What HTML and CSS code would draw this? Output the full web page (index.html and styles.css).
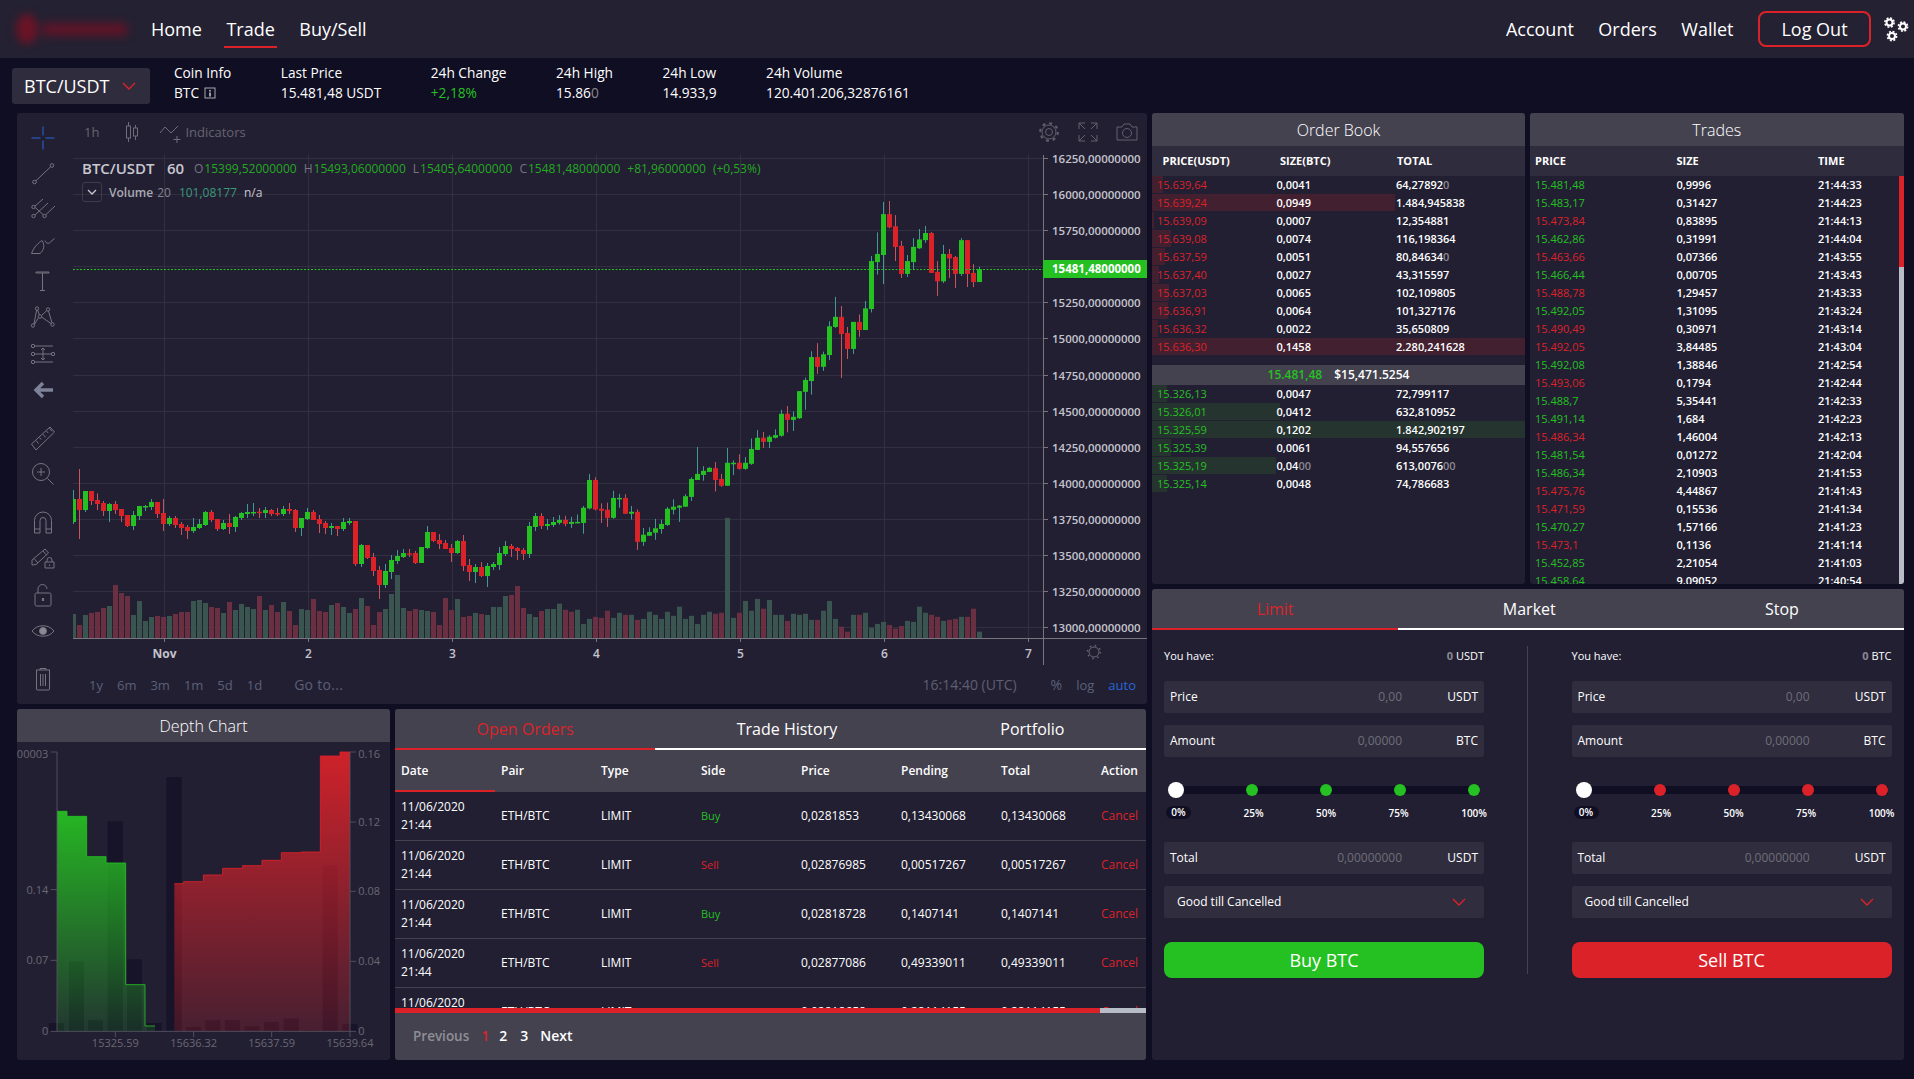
FILE: index.html
```html
<!DOCTYPE html>
<html lang="en">
<head>
<meta charset="utf-8">
<title>BTC/USDT Trade</title>
<link rel="stylesheet" href="styles.css">
</head>
<body>
<header class="topbar">
  <div class="logo" aria-hidden="true"><span class="logo-mark"></span><span class="logo-word"></span></div>
  <nav class="nav">
    <a class="nav-link">Home</a>
    <a class="nav-link is-active">Trade</a>
    <a class="nav-link">Buy/Sell</a>
  </nav>
  <nav class="nav nav-right">
    <a class="nav-link">Account</a>
    <a class="nav-link">Orders</a>
    <a class="nav-link">Wallet</a>
    <a class="logout">Log Out</a>
    <svg class="gears" viewBox="0 0 25 25" width="25" height="25">
      <g fill="none" stroke="#fff">
        <g><circle cx="5.5" cy="5.5" r="3" stroke-width="2"/><circle cx="5.5" cy="5.5" r="4.6" stroke-width="1.6" stroke-dasharray="2 1.61"/></g>
        <g><circle cx="19" cy="9.5" r="3" stroke-width="2"/><circle cx="19" cy="9.5" r="4.6" stroke-width="1.6" stroke-dasharray="2 1.61"/></g>
        <g><circle cx="8" cy="19" r="3" stroke-width="2"/><circle cx="8" cy="19" r="4.6" stroke-width="1.6" stroke-dasharray="2 1.61"/></g>
      </g>
    </svg>
  </nav>
</header>

<section class="ticker">
  <button class="pair-btn">BTC/USDT
    <svg class="chev" viewBox="0 0 14 8" width="14" height="8"><path d="M1 1l6 6 6-6" fill="none" stroke="#dc2229" stroke-width="1.4"/></svg>
  </button>
  <div class="stats">
    <div class="stat"><span>Coin Info</span><span class="with-icon">BTC
      <svg viewBox="0 0 12 12" width="12" height="12"><rect x="1" y="1" width="10" height="10" fill="none" stroke="#a9a8b0"/><path d="M6 3v1.4M6 5.4V9.4" stroke="#d8d8dc" stroke-width="1.4"/></svg></span></div>
    <div class="stat"><span>Last Price</span><span>15.481,48 USDT</span></div>
    <div class="stat"><span>24h Change</span><span class="green">+2,18%</span></div>
    <div class="stat"><span>24h High</span><span>15.86<span class="dim">0</span></span></div>
    <div class="stat"><span>24h Low</span><span>14.933,9</span></div>
    <div class="stat"><span>24h Volume</span><span>120.401.206,32876161</span></div>
  </div>
</section>

<main class="workspace">
  <div class="col-left">
    <section class="panel chart-panel">
      <aside class="tools">
        <svg class="tool" viewBox="0 0 24 24"><path stroke="#2766d8" d="M12 .5v9M12 14.500v9M.5 12h9M14.500 12h9"/></svg>
        <svg class="tool" viewBox="0 0 24 24"><circle cx="3.500" cy="20" r="1.800"/><circle cx="21" cy="3.500" r="1.800"/><path d="M5 18.700L19.600 4.800"/></svg>
        <svg class="tool" viewBox="0 2 24 24"><circle cx="2.500" cy="11" r="1.700"/><circle cx="2.500" cy="20" r="1.700"/><circle cx="13.500" cy="20" r="1.700"/><path d="M4 10l8-7M4.200 11.500l7.800 7M4 19L17 7M15 18.500L24 10"/></svg>
        <svg class="tool" viewBox="0 2.500 24 24"><path d="M.5 22C3 15 8 11 11 9c3 4 2 10-2 13zM14 9c1 4 5 3 6 1l3.500-3"/></svg>
        <svg class="tool" viewBox="0 1 24 24"><path d="M5 3h13v1H5zM11.500 4v17M9 21.500h5"/></svg>
        <svg class="tool" viewBox="0 1.500 24 24"><circle cx="2" cy="21" r="1.700"/><circle cx="6" cy="4" r="1.700"/><circle cx="9" cy="12" r="1.700"/><circle cx="17" cy="5" r="1.700"/><circle cx="21.500" cy="20" r="1.700"/><path d="M3 19.500L5.600 5.700M3.300 20L7.700 13M6.700 5.500l1.700 5M10.500 11l5.300-5M10.500 12.500l9.800 6.700M17.500 6.600l3.500 11.700"/></svg>
        <svg class="tool" viewBox="0 0 24 24"><circle cx="2" cy="4" r="1.700"/><circle cx="2" cy="12" r="1.700"/><circle cx="2" cy="20" r="1.700"/><circle cx="22" cy="12" r="1.700"/><path d="M3.700 4H22M3.700 12h16.600M3.700 20H22M12 6v12M10 8l2-2 2 2M10 16l2 2 2-2"/></svg>
        <svg class="tool tool-arrow" viewBox="0 0 24 24"><path d="M22 12H6M12 5l-7 7 7 7"/></svg>
        <svg class="tool" viewBox="0 0 24 24"><path d="M.5 18L19 1l4.500 5L5 24zM5 14.500l2.500 3M8.500 11.500l1.700 2M12 8.300l2.500 3M15.500 5l1.700 2M18.500 2.300l2.500 3"/></svg>
        <svg class="tool" viewBox="0 0 24 24"><circle cx="10" cy="10" r="8.500"/><path d="M6 10h8M10 6v8M16.500 16.500l6 6"/></svg>
        <svg class="tool" viewBox="0 1 24 24"><path d="M3.500 23V10.500a8.500 8.500 0 0 1 17 0V23h-5.500V10.500a3 3 0 0 0-6 0V23zM3.500 19h5.500M15 19h5.500"/></svg>
        <svg class="tool" viewBox="0 2 24 24"><path d="M1 15L14 4l3.500 4L5 19.500l-4 .5zM3 13.500l4 4.500M12 6l3.500 4"/><path d="M14 17h9v6h-9zM16 17v-2a2.500 2.500 0 0 1 5 0v2M18.500 19.500v1.500"/></svg>
        <svg class="tool" viewBox="0 0 24 24"><rect x="4" y="10" width="16" height="13" rx="1.500"/><path d="M7 10V6a4.500 4.500 0 0 1 9 0"/><path stroke-width="2.200" d="M12 15v3"/></svg>
        <svg class="tool" viewBox="0 0 24 24"><path d="M1 12c5-7 17-7 22 0-5 7-17 7-22 0z"/><circle cx="12" cy="12" r="3.500" fill="#8b8a95"/></svg>
        <svg class="tool" viewBox="0 2 24 24"><path d="M5 3h14M9 3V1.500h6V3M5.500 3v19a1 1 0 0 0 1 1h11a1 1 0 0 0 1-1V3M9.500 7v12M12 7v12M14.500 7v12"/></svg>
      </aside>
      <div class="chart-main">
        <div class="chart-toolbar">
          <span class="interval">1h</span>
          <svg class="tb-candle" viewBox="0 0 14 20" width="14" height="20"><path d="M3.500 0v20M10.500 3v15" stroke="#6f6d7a" fill="none"/><rect x="1.500" y="4" width="4" height="12" fill="#221f33" stroke="#6f6d7a"/><rect x="8.500" y="6" width="4" height="8" fill="#221f33" stroke="#6f6d7a"/></svg>
          <svg class="tb-ind" viewBox="0 0 24 18" width="24" height="18"><path d="M0 8l5-6 6 6 7-7M17 11v7M13.500 14.500h7" fill="none" stroke="#6f6d7a"/></svg>
          <span class="indicators">Indicators</span>
          <span class="tb-spacer"></span>
          <svg class="tb-icon" viewBox="0 0 22 22" width="22" height="22"><circle cx="11" cy="11" r="3.500"/><circle cx="11" cy="11" r="7"/><circle cx="11" cy="11" r="8.800" stroke-width="2" stroke-dasharray="3 3.900"/></svg>
          <svg class="tb-icon" viewBox="0 0 22 22" width="22" height="22"><path d="M2 8V2h6M14 2h6v6M20 14v6h-6M8 20H2v-6M2 2l6 6M20 2l-6 6M20 20l-6-6M2 20l6-6"/></svg>
          <svg class="tb-icon" viewBox="0 0 22 22" width="22" height="22"><path d="M1 6h5l2-3h6l2 3h5v13H1z"/><circle cx="11" cy="12" r="4.500"/></svg>
        </div>
        <div class="chart-stage">
          <svg id="chart" class="chart-svg" viewBox="73 155 1074 518" width="1074" height="518"></svg>
          <div class="legend">
            <div class="legend-row"><span class="leg-pair">BTC/USDT</span><span class="leg-int">60</span>
              <span class="leg-ohlc"><i>O</i>15399,52000000</span><span class="leg-ohlc"><i>H</i>15493,06000000</span><span class="leg-ohlc"><i>L</i>15405,64000000</span><span class="leg-ohlc"><i>C</i>15481,48000000</span><span class="leg-ohlc">+81,96000000</span><span class="leg-ohlc">(+0,53%)</span></div>
            <div class="legend-row legend-vol"><span class="leg-btn"><svg viewBox="0 0 10 6" width="10" height="6"><path d="M1 1l4 4 4-4" fill="none" stroke="#c8c8d0" stroke-width="1.300"/></svg></span><span class="vol-name">Volume</span><span class="vol-len">20</span><span class="vol-val">101,08177</span><span class="vol-na">n/a</span></div>
          </div>
        </div>
        <div class="chart-footer">
          <span>1y</span><span>6m</span><span>3m</span><span>1m</span><span>5d</span><span>1d</span>
          <span class="goto">Go to...</span>
          <span class="tb-spacer"></span>
          <span class="clock">16:14:40 (UTC)</span><span class="pct">%</span><span>log</span><span class="auto">auto</span>
        </div>
      </div>
    </section>

    <div class="lower">
      <section class="panel depth">
        <h2 class="panel-title">Depth Chart</h2>
        <svg class="depth-svg" viewBox="51 125 1119 957" width="373" height="319">
          <defs>
            <linearGradient id="gGreen" x1="0" y1="0" x2="0" y2="1"><stop offset="0" stop-color="#26bb22" stop-opacity=".97"/><stop offset="1" stop-color="#25c022" stop-opacity=".15"/></linearGradient>
            <linearGradient id="gRed" x1="0" y1="0" x2="0" y2="1"><stop offset="0" stop-color="#dc2229" stop-opacity=".93"/><stop offset="1" stop-color="#dc2229" stop-opacity=".2"/></linearGradient>
          </defs>
          <g fill="#171429">
            <rect x="147" y="968" width="45" height="25"/><rect x="207" y="783" width="45" height="210"/><rect x="264" y="960" width="45" height="33"/><rect x="323" y="363" width="46" height="630"/><rect x="381" y="777" width="45" height="216"/><rect x="440" y="968" width="45" height="25"/><rect x="499" y="230" width="46" height="763"/><rect x="558" y="980" width="45" height="13"/><rect x="616" y="960" width="45" height="33"/><rect x="675" y="959" width="45" height="34"/><rect x="734" y="978" width="45" height="15"/><rect x="792" y="965" width="45" height="28"/><rect x="851" y="954" width="45" height="39"/><rect x="910" y="990" width="45" height="3"/><rect x="968" y="495" width="45" height="498"/><rect x="1027" y="971" width="45" height="22"/>
          </g>
          <path d="M171 993V333h30v15h59v121h58v19h59v365h58v124h30v16z" fill="url(#gGreen)"/>
          <path d="M171 333h30v15h59v121h58v19h59v365h58v124h30" fill="none" stroke="#25c022" stroke-width="2.500"/>
          <path d="M523 993V550h28v-6h59v-20h58v-20h59v-8h59v-16h58v-23h59v-2h58V167h59v-12h30v838z" fill="url(#gRed)"/>
          <path d="M523 550h28v-6h59v-20h58v-20h59v-8h59v-16h58v-23h59v-2h58V167h59v-12h30" fill="none" stroke="#dc2229" stroke-width="2.500"/>
          <path d="M171 155v838M152 155h19M152 568h19M152 780h19M152 993h916M1050 155v838M1050 155h18M1050 365h18M1050 573h18M1050 783h18M346 993v17M581 993v17M815 993v17M1050 993v17" fill="none" stroke="#5a5864" stroke-width="2.500"/>
          <g class="depth-labels">
            <text x="145" y="173" text-anchor="end">0.00003</text><text x="145" y="581" text-anchor="end">0.14</text><text x="145" y="791" text-anchor="end">0.07</text><text x="145" y="1004" text-anchor="end">0</text>
            <text x="1075" y="173">0.16</text><text x="1075" y="377">0.12</text><text x="1075" y="584">0.08</text><text x="1075" y="794">0.04</text><text x="1075" y="1004">0</text>
            <text x="346" y="1041" text-anchor="middle">15325.59</text><text x="581" y="1041" text-anchor="middle">15636.32</text><text x="815" y="1041" text-anchor="middle">15637.59</text><text x="1050" y="1041" text-anchor="middle">15639.64</text>
          </g>
        </svg>
      </section>

      <section class="panel orders">
        <div class="tabs tabs-orders">
          <a class="tab is-active">Open Orders</a><a class="tab">Trade History</a><a class="tab">Portfolio</a>
        </div>
        <div class="orders-scroll">
          <table class="orders-table">
            <thead><tr><th class="sorted">Date</th><th>Pair</th><th>Type</th><th>Side</th><th>Price</th><th>Pending</th><th>Total</th><th>Action</th></tr></thead>
            <tbody>
              <tr><td>11/06/2020<br>21:44</td><td>ETH/BTC</td><td>LIMIT</td><td class="side green">Buy</td><td>0,0281853</td><td>0,13430068</td><td>0,13430068</td><td class="cancel">Cancel</td></tr>
              <tr><td>11/06/2020<br>21:44</td><td>ETH/BTC</td><td>LIMIT</td><td class="side red">Sell</td><td>0,02876985</td><td>0,00517267</td><td>0,00517267</td><td class="cancel">Cancel</td></tr>
              <tr><td>11/06/2020<br>21:44</td><td>ETH/BTC</td><td>LIMIT</td><td class="side green">Buy</td><td>0,02818728</td><td>0,1407141</td><td>0,1407141</td><td class="cancel">Cancel</td></tr>
              <tr><td>11/06/2020<br>21:44</td><td>ETH/BTC</td><td>LIMIT</td><td class="side red">Sell</td><td>0,02877086</td><td>0,49339011</td><td>0,49339011</td><td class="cancel">Cancel</td></tr>
              <tr><td>11/06/2020<br>21:44</td><td>ETH/BTC</td><td>LIMIT</td><td class="side green">Buy</td><td>0,02818658</td><td>0,28114155</td><td>0,28114155</td><td class="cancel">Cancel</td></tr>
            </tbody>
          </table>
        </div>
        <div class="hscroll"><span class="hscroll-thumb"></span></div>
        <div class="pager"><span class="pg-off">Previous</span><span class="pg-on">1</span><span>2</span><span class="pg-three">3</span><span>Next</span></div>
      </section>
    </div>
  </div>

  <div class="col-right">
    <div class="books">
      <section class="panel book">
        <h2 class="panel-title">Order Book</h2>
        <div class="book-head ob-cols"><span>PRICE(USDT)</span><span>SIZE(BTC)</span><span>TOTAL</span></div>
        <div class="ob-row ob-cols"><i class="bar bar-red" style="width:11px"></i><span class="red">15.639,64</span><span>0,0041</span><span>64,27892<span class="dim">0</span></span></div>
        <div class="ob-row ob-cols"><i class="bar bar-red" style="width:243px"></i><span class="red">15.639,24</span><span>0,0949</span><span>1.484,945838</span></div>
        <div class="ob-row ob-cols"><i class="bar bar-red" style="width:2px"></i><span class="red">15.639,09</span><span>0,0007</span><span>12,354881</span></div>
        <div class="ob-row ob-cols"><i class="bar bar-red" style="width:19px"></i><span class="red">15.639,08</span><span>0,0074</span><span>116,198364</span></div>
        <div class="ob-row ob-cols"><i class="bar bar-red" style="width:13px"></i><span class="red">15.637,59</span><span>0,0051</span><span>80,84634<span class="dim">0</span></span></div>
        <div class="ob-row ob-cols"><i class="bar bar-red" style="width:7px"></i><span class="red">15.637,40</span><span>0,0027</span><span>43,315597</span></div>
        <div class="ob-row ob-cols"><i class="bar bar-red" style="width:17px"></i><span class="red">15.637,03</span><span>0,0065</span><span>102,109805</span></div>
        <div class="ob-row ob-cols"><i class="bar bar-red" style="width:16px"></i><span class="red">15.636,91</span><span>0,0064</span><span>101,327176</span></div>
        <div class="ob-row ob-cols"><i class="bar bar-red" style="width:6px"></i><span class="red">15.636,32</span><span>0,0022</span><span>35,650809</span></div>
        <div class="ob-row ob-cols"><i class="bar bar-red" style="width:373px"></i><span class="red">15.636,30</span><span>0,1458</span><span>2.280,241628</span></div>
        <div class="ob-mid"><span class="green">15.481,48</span><span>$15,471.5254</span></div>
        <div class="ob-row ob-cols"><i class="bar bar-green" style="width:15px"></i><span class="green">15.326,13</span><span>0,0047</span><span>72,799117</span></div>
        <div class="ob-row ob-cols"><i class="bar bar-green" style="width:128px"></i><span class="green">15.326,01</span><span>0,0412</span><span>632,810952</span></div>
        <div class="ob-row ob-cols"><i class="bar bar-green" style="width:373px"></i><span class="green">15.325,59</span><span>0,1202</span><span>1.842,902197</span></div>
        <div class="ob-row ob-cols"><i class="bar bar-green" style="width:19px"></i><span class="green">15.325,39</span><span>0,0061</span><span>94,557656</span></div>
        <div class="ob-row ob-cols"><i class="bar bar-green" style="width:124px"></i><span class="green">15.325,19</span><span>0,04<span class="dim">00</span></span><span>613,0076<span class="dim">00</span></span></div>
        <div class="ob-row ob-cols"><i class="bar bar-green" style="width:15px"></i><span class="green">15.325,14</span><span>0,0048</span><span>74,786683</span></div>
      </section>

      <section class="panel book trades">
        <h2 class="panel-title">Trades</h2>
        <div class="book-head tr-cols"><span>PRICE</span><span>SIZE</span><span>TIME</span></div>
        <div class="trades-wrap">
          <div class="trades-list">
            <div class="ob-row tr-cols"><span class="green">15.481,48</span><span>0,9996</span><span>21:44:33</span></div>
            <div class="ob-row tr-cols"><span class="green">15.483,17</span><span>0,31427</span><span>21:44:23</span></div>
            <div class="ob-row tr-cols"><span class="red">15.473,84</span><span>0,83895</span><span>21:44:13</span></div>
            <div class="ob-row tr-cols"><span class="green">15.462,86</span><span>0,31991</span><span>21:44:04</span></div>
            <div class="ob-row tr-cols"><span class="red">15.463,66</span><span>0,07366</span><span>21:43:55</span></div>
            <div class="ob-row tr-cols"><span class="green">15.466,44</span><span>0,00705</span><span>21:43:43</span></div>
            <div class="ob-row tr-cols"><span class="red">15.488,78</span><span>1,29457</span><span>21:43:33</span></div>
            <div class="ob-row tr-cols"><span class="green">15.492,05</span><span>1,31095</span><span>21:43:24</span></div>
            <div class="ob-row tr-cols"><span class="red">15.490,49</span><span>0,30971</span><span>21:43:14</span></div>
            <div class="ob-row tr-cols"><span class="red">15.492,05</span><span>3,84485</span><span>21:43:04</span></div>
            <div class="ob-row tr-cols"><span class="green">15.492,08</span><span>1,38846</span><span>21:42:54</span></div>
            <div class="ob-row tr-cols"><span class="red">15.493,06</span><span>0,1794</span><span>21:42:44</span></div>
            <div class="ob-row tr-cols"><span class="green">15.488,7</span><span>5,35441</span><span>21:42:33</span></div>
            <div class="ob-row tr-cols"><span class="green">15.491,14</span><span>1,684</span><span>21:42:23</span></div>
            <div class="ob-row tr-cols"><span class="red">15.486,34</span><span>1,46004</span><span>21:42:13</span></div>
            <div class="ob-row tr-cols"><span class="green">15.481,54</span><span>0,01272</span><span>21:42:04</span></div>
            <div class="ob-row tr-cols"><span class="green">15.486,34</span><span>2,10903</span><span>21:41:53</span></div>
            <div class="ob-row tr-cols"><span class="red">15.475,76</span><span>4,44867</span><span>21:41:43</span></div>
            <div class="ob-row tr-cols"><span class="red">15.471,59</span><span>0,15536</span><span>21:41:34</span></div>
            <div class="ob-row tr-cols"><span class="green">15.470,27</span><span>1,57166</span><span>21:41:23</span></div>
            <div class="ob-row tr-cols"><span class="red">15.473,1</span><span>0,1136</span><span>21:41:14</span></div>
            <div class="ob-row tr-cols"><span class="green">15.452,85</span><span>2,21054</span><span>21:41:03</span></div>
            <div class="ob-row tr-cols"><span class="green">15.458,64</span><span>9,09052</span><span>21:40:54</span></div>
          </div>
          <div class="vscroll"><span class="vscroll-thumb"></span></div>
        </div>
      </section>
    </div>

    <section class="panel order-form">
      <div class="tabs tabs-form">
        <a class="tab is-active">Limit</a><a class="tab">Market</a><a class="tab">Stop</a>
      </div>
      <div class="form-body">
        <div class="order-col">
          <div class="have"><span>You have:</span><span><b class="dim">0</b> USDT</span></div>
          <div class="field"><span class="f-label">Price</span><span class="f-val">0,00</span><span class="f-unit">USDT</span></div>
          <div class="field"><span class="f-label">Amount</span><span class="f-val">0,00000</span><span class="f-unit">BTC</span></div>
          <div class="slider slider-buy"><span class="knob"></span><span class="dot"></span><span class="dot"></span><span class="dot"></span><span class="dot"></span></div>
          <div class="slider-labels"><span class="first">0%</span><span>25%</span><span>50%</span><span>75%</span><span>100%</span></div>
          <div class="field field-total"><span class="f-label">Total</span><span class="f-val">0,00000000</span><span class="f-unit">USDT</span></div>
          <div class="select">Good till Cancelled<svg viewBox="0 0 14 8" width="14" height="8"><path d="M1 1l6 6 6-6" fill="none" stroke="#dc2229" stroke-width="1.400"/></svg></div>
          <button class="action action-buy">Buy BTC</button>
        </div>
        <div class="form-divider"></div>
        <div class="order-col">
          <div class="have"><span>You have:</span><span><b class="dim">0</b> BTC</span></div>
          <div class="field"><span class="f-label">Price</span><span class="f-val">0,00</span><span class="f-unit">USDT</span></div>
          <div class="field"><span class="f-label">Amount</span><span class="f-val">0,00000</span><span class="f-unit">BTC</span></div>
          <div class="slider slider-sell"><span class="knob"></span><span class="dot"></span><span class="dot"></span><span class="dot"></span><span class="dot"></span></div>
          <div class="slider-labels"><span class="first">0%</span><span>25%</span><span>50%</span><span>75%</span><span>100%</span></div>
          <div class="field field-total"><span class="f-label">Total</span><span class="f-val">0,00000000</span><span class="f-unit">USDT</span></div>
          <div class="select">Good till Cancelled<svg viewBox="0 0 14 8" width="14" height="8"><path d="M1 1l6 6 6-6" fill="none" stroke="#dc2229" stroke-width="1.400"/></svg></div>
          <button class="action action-sell">Sell BTC</button>
        </div>
      </div>
    </section>
  </div>
</main>
<script src="chart.js"></script>
</body>
</html>
```

FILE: styles.css
```css
* { box-sizing: border-box; }
html, body { margin: 0; padding: 0; }
body {
  width: 1914px;
  height: 1079px;
  overflow: hidden;
  background: #100e22;
  color: #fff;
  font-family: "Open Sans", "Liberation Sans", sans-serif;
}
.green { color: #25c022; }
.red { color: #dc2229; }
.dim { color: #8a8992; }

/* top bar */
.topbar {
  height: 58px;
  display: flex;
  align-items: center;
  background: #242132;
  position: relative;
}
.logo {
  width: 138px;
  height: 58px;
  display: flex;
  align-items: center;
  gap: 5px;
  padding-left: 16px;
  filter: blur(4px);
}
.logo-mark { width: 22px; height: 30px; border-radius: 50%; background: #6a1426; }
.logo-word { width: 84px; height: 13px; background: #5e1428; }
.nav { display: flex; align-items: center; gap: 24.500px; margin-left: 13px; height: 58px; }
.nav-right { margin-left: auto; padding-right: 5px; }
.nav-link {
  font-size: 18px;
  line-height: 24px;
  color: #fff;
  position: relative;
}
.nav-link.is-active::after {
  content: "";
  position: absolute;
  left: -2px;
  right: -2px;
  top: 29px;
  height: 2px;
  background: #dc2229;
}
.logout {
  width: 113px;
  height: 36px;
  border: 2px solid #dc2229;
  border-radius: 8px;
  font-size: 18px;
  display: flex;
  align-items: center;
  justify-content: center;
}
.gears { margin-left: -11.500px; }

/* ticker */
.ticker {
  height: 55px;
  display: flex;
  align-items: center;
  padding-left: 12px;
}
.pair-btn {
  width: 138px;
  height: 36px;
  background: #2f2c3d;
  border: 0;
  border-radius: 3px;
  color: #fff;
  font: 400 18px "Open Sans", sans-serif;
  display: flex;
  align-items: center;
  justify-content: space-between;
  padding: 0 14px 0 12px;
}
.stats { display: flex; gap: 49.500px; margin-left: 24px; padding-bottom: 5px; }
.stat { display: flex; flex-direction: column; font-size: 13.700px; line-height: 20.500px; }
.with-icon { display: flex; align-items: center; gap: 5px; }

/* workspace */
.workspace {
  display: flex;
  gap: 5px;
  padding-left: 17px;
}
.col-left { width: 1130px; display: flex; flex-direction: column; gap: 5px; }
.col-right { width: 751.500px; display: flex; flex-direction: column; gap: 5px; }
.panel { background: #221f33; border-radius: 3px; overflow: hidden; }
.panel-title {
  margin: 0;
  height: 33px;
  background: #44424f;
  font-size: 16px;
  font-weight: 300;
  line-height: 34px;
  text-align: center;
}

/* chart */
.chart-panel { height: 591px; display: flex; }
.tools { width: 56px; display: flex; flex-direction: column; align-items: center; padding-top: 12.500px; padding-right: 4px; }
.tool {
  width: 24px;
  height: 24px;
  margin-bottom: 12px;
  fill: none;
  stroke: #757480;
  stroke-width: 1;
  flex: none;
  overflow: visible;
}
.tool-arrow { stroke: #7d8298; stroke-width: 3.400; margin-bottom: 24px; }
.tool:nth-child(10) { margin-bottom: 25px; }
.tool:nth-child(14) { margin-bottom: 26px; }
.chart-main { width: 1074px; display: flex; flex-direction: column; }
.chart-toolbar {
  height: 42px;
  display: flex;
  align-items: center;
  padding: 0 0 4px 11px;
  font-size: 13px;
  color: #66646f;
}
.tb-candle { margin-left: 26px; }
.tb-ind { margin-left: 21px; margin-top: 4px; }
.indicators { margin-left: 1px; }
.tb-spacer { flex: 1; }
.tb-icon {
  fill: none;
  stroke: #62606c;
  stroke-width: 1;
  margin-right: 17px;
}
.tb-icon:last-child { margin-right: 9px; }
.chart-stage { position: relative; height: 518px; }
.chart-svg { display: block; }
.chart-svg text { font-family: "Open Sans", sans-serif; }
.axis-y { font-size: 11.500px; font-weight: 600; fill: #c4c4cc; }
.axis-tag { font-size: 11.500px; font-weight: 700; fill: #fff; }
.axis-x { font-size: 12px; font-weight: 600; fill: #c4c4cc; text-anchor: middle; }
.axis-x-strong { font-weight: 700; }
.legend {
  position: absolute;
  left: 9px;
  top: 2px;
}
.legend-row { display: flex; align-items: center; height: 22px; white-space: nowrap; }
.leg-pair { font-size: 15px; color: #c8c8d0; font-weight: 600; width: 73px; white-space: nowrap; }
.leg-int { font-size: 15px; color: #c8c8d0; font-weight: 600; margin-left: 12px; width: 27px; }
.leg-ohlc { font-size: 12px; color: #25a822; margin-right: 7px; }
.leg-ohlc i { font-style: normal; color: #77757f; margin-right: 1px; }
.legend-vol { margin-top: 2px; }
.leg-btn { width: 20px; height: 20px; border: 1px solid #3d3b4b; border-radius: 3px; display: flex; align-items: center; justify-content: center; margin-right: 7px; }
.vol-name { font-size: 12px; font-weight: 600; color: #aaa9b3; }
.vol-len { font-size: 12px; color: #85848f; margin-left: 4px; }
.vol-val { font-size: 12px; color: #3a9a7a; margin-left: 8px; }
.vol-na { font-size: 12px; color: #c8c8d0; margin-left: 7px; }
.chart-footer {
  height: 31px;
  display: flex;
  align-items: center;
  padding: 0 0 8px 16px;
  font-size: 13px;
  color: #5a6078;
  gap: 14px;
}
.goto { margin-left: 18px; font-size: 14px; letter-spacing: .3px; }
.clock { color: #5f5f70; margin-right: 20px; font-size: 14px; }
.pct { font-size: 14px; }
.auto { color: #2766d8; margin-right: 11px; }

/* lower */
.lower { display: flex; gap: 5px; height: 351px; }
.depth { width: 373px; }
.depth-svg { display: block; }
.depth-labels text { font-family: "Open Sans", sans-serif; font-size: 33px; fill: #6a6874; }
.orders { width: 751px; display: flex; flex-direction: column; }
.tabs { display: flex; background: #44424f; height: 41px; }
.tab {
  flex: 1 1 auto;
  text-align: center;
  font-size: 16px;
  line-height: 38px;
  padding-top: 1px;
  border-bottom: 2px solid #fff;
  color: #fff;
}
.tab.is-active { color: #dc2229; border-bottom-color: #dc2229; }
.orders-scroll { height: 258px; overflow: hidden; }
.orders-table { width: 751px; table-layout: fixed; border-collapse: separate; border-spacing: 0; font-size: 12px; }
.orders-table th {
  height: 42px;
  background: #44424f;
  font-weight: 600;
  text-align: left;
  padding: 0 0 2px 6px;
  width: 100px;
}
.orders-table th:last-child { width: 51px; }
.orders-table th.sorted { box-shadow: inset 0 -2px 0 #dc2229; }
.orders-table td {
  height: 49px;
  padding: 0 0 0 6px;
  line-height: 18px;
  border-bottom: 1px solid #44424f;
  white-space: nowrap;
}
.orders-table .side { font-size: 11px; }
.orders-table .cancel { color: #dc2229; }
.hscroll { height: 5px; background: #b8bcc6; display: flex; flex: none; }
.hscroll-thumb { width: 705px; background: #dc2229; }
.pager {
  flex: 1;
  background: #44424f;
  display: flex;
  align-items: center;
  padding: 0 0 2px 18px;
  gap: 12px;
  font-size: 14px;
  font-weight: 600;
}
.pg-off { color: #8f8e96; font-size: 13.500px; }
.pg-on { color: #dc2229; margin-right: -2px; }
.pg-three { margin-left: 1px; }

/* books */
.books { display: flex; gap: 5px; height: 471px; }
.book { width: 373px; }
.trades { width: 373.500px; }
.book-head {
  height: 30px;
  background: #2f2c3d;
  font-size: 11px;
  font-weight: 700;
  align-items: center;
  padding-bottom: 2px;
}
.ob-cols { display: grid; grid-template-columns: 119.500px 119.500px 1fr; }
.book-head.ob-cols { padding-left: 10.500px; grid-template-columns: 117.500px 117px 1fr; }
.ob-row {
  position: relative;
  height: 18px;
  font-size: 11px;
  line-height: 18px;
  font-weight: 600;
  padding-left: 5px;
  white-space: nowrap;
}
.ob-row span { position: relative; }
.ob-row > span:first-of-type { font-weight: 400; }
.bar { position: absolute; left: 0; top: 0; height: 17px; }
.bar-red { background: #432030; }
.bar-green { background: #25342f; }
.ob-mid {
  margin-top: 9px;
  height: 20px;
  background: #44424f;
  display: flex;
  justify-content: center;
  align-items: center;
  gap: 12px;
  font-size: 12px;
  font-weight: 600;
  padding-bottom: 2px;
}
.tr-cols { display: grid; grid-template-columns: 141.500px 141.500px 1fr; padding-left: 5px; }
.trades-wrap { position: relative; height: 408px; overflow: hidden; }
.trades-list { padding-right: 5px; }
.vscroll {
  position: absolute;
  right: 0;
  top: 0;
  width: 5px;
  height: 100%;
  background: #b8bcc6;
}
.vscroll-thumb { display: block; height: 91px; background: #dc2229; }

/* order form */
.order-form { height: 471px; }
.form-body { display: flex; justify-content: space-between; padding: 0 12px 0 12px; }
.order-col { width: 320px; padding-top: 18px; }
.form-divider { width: 1px; height: 328px; margin-top: 16px; background: #44424f; }
.have { display: flex; justify-content: space-between; height: 16px; font-size: 11px; line-height: 16px; }
.have b { font-weight: 700; }
.field, .select {
  height: 32px;
  margin-top: 12px;
  background: #302d3e;
  border-radius: 2px;
  display: flex;
  align-items: center;
  font-size: 12px;
  padding: 0 6px 1px;
}
.have + .field { margin-top: 17px; }
.field { position: relative; }
.f-label { flex: 1; }
.f-val { color: #6f6d79; margin-right: 76px; }
.f-unit { position: absolute; right: 6px; }
.slider {
  margin-top: 25px;
  height: 16px;
  display: flex;
  align-items: center;
  justify-content: space-between;
  padding: 0 4px;
  background: linear-gradient(#100e22, #100e22) 12px 4px / 304px 8px no-repeat;
}
.knob { width: 16px; height: 16px; border-radius: 50%; background: #fff; }
.dot { width: 12px; height: 12px; border-radius: 50%; }
.slider-buy .dot { background: #25c022; }
.slider-sell .dot { background: #dc2229; }
.slider-labels {
  margin: 8px -3px 0 2px;
  height: 13px;
  display: flex;
  justify-content: space-between;
  align-items: center;
  font-size: 10px;
  font-weight: 600;
}
.slider-labels .first { width: 25px; height: 13px; line-height: 13px; text-align: center; background: #100e22; border-radius: 7px; }
.field-total { margin-top: 23px; }
.select { padding: 0 18px 1px 13px; justify-content: space-between; font-size: 12px; }
.action {
  width: 100%;
  height: 36px;
  margin-top: 24px;
  border: 0;
  border-radius: 8px;
  color: #fff;
  font: 400 18px "Open Sans", sans-serif;
}
.action-buy { background: #25c022; }
.action-sell { background: #dc2229; }
```

FILE: chart.js
```js
(function () {
  var NS = 'http://www.w3.org/2000/svg';
  var svg = document.getElementById('chart');
  function el(name, attrs, text, parent) {
    var n = document.createElementNS(NS, name);
    for (var k in attrs) n.setAttribute(k, attrs[k]);
    if (text !== undefined && text !== null) n.textContent = text;
    (parent || svg).appendChild(n);
    return n;
  }
  // colour flag, wick top, body top, body bottom, wick bottom (first series: 3x crop units from y=440)
  var A = [
    ['g',150,177,246,252],['r',87,177,210,297],['g',153,153,210,216],['r',153,153,183,195],['r',160,180,192,210],
    ['r',183,189,213,228],['g',189,192,213,246],['r',183,192,210,222],['r',207,207,228,246],['r',225,225,258,261],
    ['g',213,225,258,270],['g',198,198,228,240],['g',195,198,201,213],['g',177,186,201,210],['r',186,186,222,234],
    ['r',177,219,252,273],['g',228,234,252,258],['r',228,234,255,264],['r',246,252,264,285],['r',255,261,273,297],
    ['g',234,261,273,279],['g',237,252,264,267],['g',213,216,255,258],['r',210,216,240,246],['r',237,237,267,273],
    ['g',240,249,267,270],['r',222,249,261,282],['g',228,231,261,276],['g',216,219,234,240],['g',192,216,222,234],
    ['g',189,216,220,228],['r',204,215,219,234],['g',201,210,219,234],['r',207,210,222,228],['r',204,219,221,228],
    ['g',198,207,222,228],['r',189,207,213,222],['r',207,210,264,276],['g',234,234,264,288],['g',204,216,237,240],
    ['r',210,216,240,240],['r',225,237,252,279],['r',243,249,264,282],['g',249,258,264,285],['r',258,258,267,288],
    ['g',234,246,267,273],['g',234,243,249,255],['r',243,243,372,378],['g',312,315,372,381],['r',315,315,354,357],
    ['r',339,351,393,408],['r',378,390,435,477],['g',372,393,435,444],['g',345,360,396,417],['g',330,348,363,372],
    ['g',327,339,351,354],['r',327,340,343,351],['r',333,339,369,372],['g',321,321,369,369],['g',258,276,324,327],
    ['r',276,276,303,306],['r',282,300,312,327],['r',300,309,327,327],['r',312,324,339,366],['g',300,303,339,342],
    ['r',285,303,378,393],['r',357,375,396,423],['g',372,381,396,429],['r',366,381,408,411],['g',369,378,408,441],
    ['g',366,372,381,390],['g',321,339,375,390],['g',303,318,342,348],['r',312,318,327,351],['r',321,324,333,360],
    ['r',324,330,342,360],['g',246,258,342,354],['g',219,228,261,273],['r',219,228,258,267],['g',237,252,258,270],
    ['g',231,246,255,261]
  ];
  // second series: crop units, y = 180 + v / 2.96
  var B = [
    ['g',992,1006,1015,1020],['r',994,1006,1018,1025],['g',997,1012,1018,1030],['g',990,1012,1015,1015],['g',965,970,1015,1047],
    ['g',870,888,972,975],['r',880,888,975,978],['r',957,973,979,1015],['r',955,976,1000,1027],['g',920,941,1000,1003],
    ['g',929,941,944,970],['r',930,941,988,988],['g',965,982,988,1005],['r',975,982,1071,1095],['g',1030,1050,1071,1083],
    ['g',1028,1042,1053,1053],['g',1003,1031,1044,1065],['g',1005,1018,1033,1047],['g',968,973,1021,1024],['g',945,967,976,990],
    ['g',962,964,970,1012],['g',930,936,967,967],['g',880,885,938,950],['g',790,870,888,888],['g',847,861,873,890],
    ['g',850,852,864,864],['r',835,853,888,922],['r',870,885,905,908],['g',793,837,905,905],['g',830,837,840,873],
    ['r',812,837,855,857],['g',820,837,855,858],['g',765,796,840,843],['g',740,763,799,799],['r',746,763,775,793],
    ['g',755,760,775,793],['g',738,755,763,765],['g',680,692,757,760],['r',669,692,710,747],['g',685,701,710,743],
    ['g',625,625,705,707],['g',585,592,627,680],['g',507,524,595,635],['r',483,524,553,574],['g',508,516,553,565],
    ['g',418,433,518,533],['g',346,405,435,438],['r',373,405,456,586],['r',435,453,500,530],['g',420,420,500,515],
    ['r',398,420,444,464],['g',358,380,444,444],['g',225,240,382,392],['g',155,219,243,280],['g',65,101,222,308],
    ['r',62,101,140,143],['r',104,137,198,240],['r',180,195,278,290],['g',222,240,278,287],['g',172,198,243,265],
    ['g',145,176,202,204],['g',136,157,178,186],['r',154,157,275,275],['r',240,272,300,343],['g',192,219,300,305],
    ['r',204,219,232,290],['r',225,228,278,320],['g',172,178,278,284],['r',178,178,278,317],['r',249,275,302,317],
    ['g',257,264,302,302]
  ];
  // volume tops and colours
  var VA = ('522g 555r 525g 519r 516r 504r 498g 435r 459r 468r 525g 483g 543g 531g 528r 531r 528g 522r 516r 516r ' +
    '483g 480g 489g 501r 504r 519g 486r 510g 492g 501g 507g 468r 510g 495r 516r 486g 513r 555r 507g 510g ' +
    '477r 513r 516r 495g 489r 501g 519g 507r 474g 498r 555r 516r 507g 462g 405g 504g 513r 507r 510g 513g ' +
    '516r 555r 474r 510r 477g 531r 528r 519g 522r 525g 501g 501g 468g 465r 438r 504r 522g 531g 513r 507g 507g').split(' ');
  var VB = ('1254g 1272r 1278r 1272g 1314g 1299g 1293r 1296r 1275r 1296g 1281g 1287r 1287g 1302r 1299g 1278g 1287g 1299g 1278g 1290g ' +
    '1263g 1299g 1290g 1314g 1287g 1278g 1284r 1281r 1000g 1296g 1281r 1246g 1275g 1240g 1269r 1243g 1287g 1287g 1305r 1284g ' +
    '1287g 1284g 1302g 1302r 1275g 1246g 1299g 1322r 1337r 1287g 1287r 1281g 1325g 1314g 1308g 1317r 1328r 1320r 1305g 1308g ' +
    '1263g 1281g 1287r 1293r 1305g 1302r 1299r 1293g 1293r 1269r 1337g').split(' ');

  function ya(v) { return 440 + v / 3; }
  function yb(v) { return 180 + v / 2.96; }
  function rectX(i) { return 71 + 6 * i; }

  var GRID = '#322f41', AXIS = '#77757f';
  var LEFT = 73, RIGHT = 1147, AX = 1043, BASE = 638;

  // grid
  var prices = [16250,16000,15750,15500,15250,15000,14750,14500,14250,14000,13750,13500,13250,13000];
  prices.forEach(function (p) {
    var y = Math.round(194.2 + (16000 - p) * 0.14427) + 0.5;
    el('path', { d: 'M' + LEFT + ' ' + y + 'H' + AX, stroke: GRID, fill: 'none' });
    if (p !== 15500) el('text', { x: 1052, y: y + 4, 'class': 'axis-y' }, p + ',00000000');
    el('path', { d: 'M' + AX + ' ' + y + 'h5', stroke: AXIS, fill: 'none' });
  });
  var days = [[164,'Nov'],[308,'2'],[452,'3'],[596,'4'],[740,'5'],[884,'6'],[1028,'7']];
  days.forEach(function (d) {
    var x = d[0] + 0.5;
    el('path', { d: 'M' + x + ' 155V' + BASE, stroke: GRID, fill: 'none' });
    el('path', { d: 'M' + x + ' ' + BASE + 'v4', stroke: AXIS, fill: 'none' });
    el('text', { x: x, y: 658, 'class': d[1] === 'Nov' ? 'axis-x axis-x-strong' : 'axis-x' }, d[1]);
  });

  var defs = el('defs', {});
  var clip = el('clipPath', { id: 'pane' }, null, defs);
  el('rect', { x: LEFT, y: 155, width: AX - LEFT, height: BASE - 155 }, null, clip);
  var pane = el('g', { 'clip-path': 'url(#pane)' });

  // volume
  function vol(list, conv) {
    return list.map(function (s) {
      return { top: conv(parseFloat(s)), c: s.charAt(s.length - 1) };
    });
  }
  vol(VA, ya).concat(vol(VB, yb)).forEach(function (v, i) {
    el('rect', { x: rectX(i), y: v.top, width: 5, height: BASE - v.top, fill: v.c === 'g' ? '#3a5450' : '#6a2f40' }, null, pane);
  });

  // candles
  function series(list, conv) {
    return list.map(function (c) { return [c[0], conv(c[1]), conv(c[2]), conv(c[3]), conv(c[4])]; });
  }
  series(A, ya).concat(series(B, yb)).forEach(function (c, i) {
    var x = rectX(i), g = c[0] === 'g';
    el('rect', { x: x + 2, y: c[1], width: 1, height: c[4] - c[1], fill: g ? '#3f9b94' : '#c65560' }, null, pane);
    el('rect', { x: x, y: c[2], width: 5, height: Math.max(1.5, c[3] - c[2]), fill: g ? '#25c022' : '#dc2229' }, null, pane);
  });

  // price line and tag
  el('path', { d: 'M' + LEFT + ' 269.5H' + AX, stroke: '#25c022', 'stroke-dasharray': '2 1.500', fill: 'none' });
  el('path', { d: 'M' + (AX + 0.5) + ' 155V665M' + LEFT + ' 638.5H' + RIGHT, stroke: AXIS, fill: 'none' });
  el('rect', { x: AX, y: 260, width: RIGHT - AX, height: 18, fill: '#25c022' });
  el('text', { x: 1052, y: 273, 'class': 'axis-tag' }, '15481,48000000');
  el('text', { x: 64, y: 637, fill: '#a8a7b0', 'font-size': 12 }, '‹');

  // time axis settings wheel
  el('circle', { cx: 1094, cy: 652, r: 5, fill: 'none', stroke: '#6a6874' });
  el('circle', { cx: 1094, cy: 652, r: 6.5, fill: 'none', stroke: '#6a6874', 'stroke-width': 1.5, 'stroke-dasharray': '1.500 3.600' });
})();
```
